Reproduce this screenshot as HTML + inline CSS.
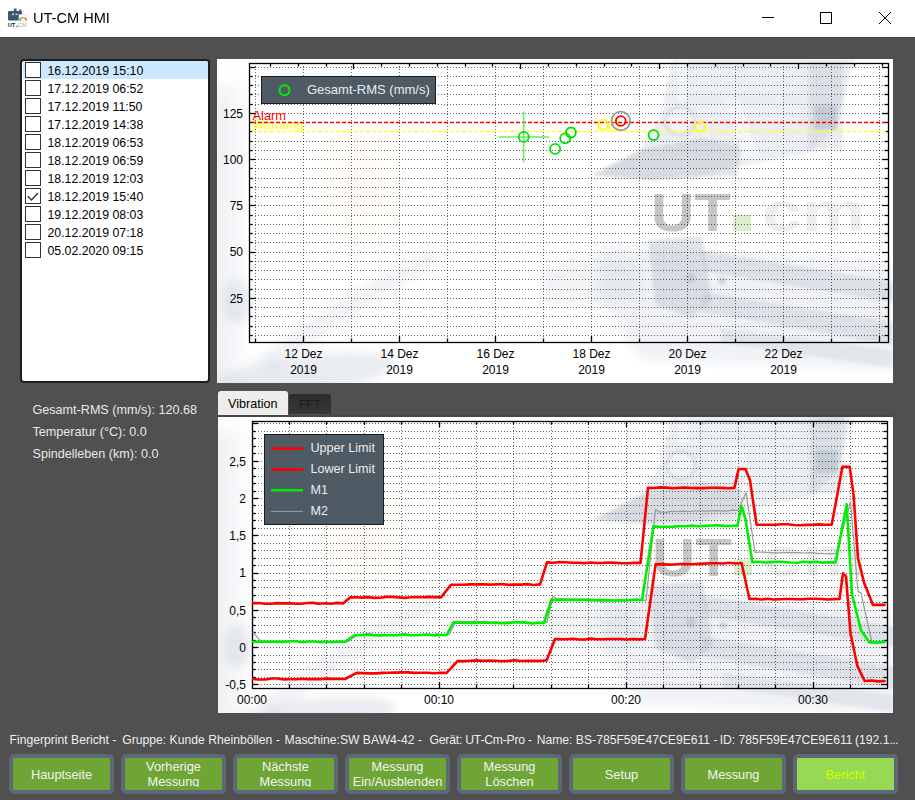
<!DOCTYPE html>
<html><head><meta charset="utf-8"><style>
html,body{margin:0;padding:0;}
body{width:915px;height:800px;overflow:hidden;position:relative;background:#505050;font-family:"Liberation Sans", sans-serif;}
div{box-sizing:content-box;}
</style></head><body>
<div style="position:absolute;left:0;top:0;width:915px;height:37px;background:#fff"></div>
<div style="position:absolute;left:0;top:37px;width:915px;height:1px;background:#464646"></div>
<svg style="position:absolute;left:0;top:0" width="40" height="37">
 <rect x="8" y="11" width="14" height="9.5" rx="1.2" fill="#3d5577"/>
 <rect x="14" y="8.5" width="2.5" height="3" fill="#3d5577"/><rect x="19.3" y="9.5" width="2" height="2" fill="#3d5577"/>
 <rect x="12" y="13.5" width="2" height="1.6" fill="#c9d3e0"/><rect x="15.5" y="13.5" width="2" height="1.6" fill="#c9d3e0"/>
 <rect x="19" y="14.5" width="7.5" height="6.5" fill="#fff" stroke="#f2b8b8" stroke-width="0.6"/>
 <path d="M19.9 20.6 A3.5 3.5 0 0 1 23 17.4" fill="none" stroke="#5fb03a" stroke-width="1.3"/>
 <path d="M23 17.4 A3.5 3.5 0 0 1 24.8 18" fill="none" stroke="#e8c020" stroke-width="1.3"/>
 <path d="M24.8 18 A3.5 3.5 0 0 1 26.2 20.2" fill="none" stroke="#e03a2a" stroke-width="1.3"/>
 <text x="7.8" y="27.3" font-size="5.6" font-weight="bold" fill="#222">UT</text>
 <rect x="16.2" y="25.5" width="1.5" height="1.8" fill="#5fb03a"/>
 <text x="18" y="27.3" font-size="5.6" fill="#aaa">CM</text>
</svg>
<div style="position:absolute;left:32.8px;top:8.5px;font-size:15.5px;line-height:18px;color:#000;transform:scaleX(0.94);transform-origin:0 0;white-space:nowrap">UT-CM HMI</div>
<svg style="position:absolute;left:0;top:0" width="915" height="37">
 <line x1="762" y1="17.5" x2="774" y2="17.5" stroke="#000" stroke-width="1"/>
 <rect x="820.5" y="12.5" width="11" height="11" fill="none" stroke="#000" stroke-width="1"/>
 <line x1="879" y1="12" x2="891" y2="24" stroke="#000" stroke-width="1"/>
 <line x1="891" y1="12" x2="879" y2="24" stroke="#000" stroke-width="1"/>
</svg>

<div style="position:absolute;left:20px;top:59px;width:186px;height:320px;border:2px solid #1e1e1e;border-radius:4px;background:#fff;overflow:hidden">
<div style="position:absolute;left:1px;top:0px;width:187px;height:18px;background:#cce8ff;"></div><div style="position:absolute;left:3px;top:1px;width:14px;height:14px;border:1px solid #333;background:#fff"></div><div style="position:absolute;left:25.5px;top:2px;height:18px;line-height:16px;font-size:12.3px;color:#000">16.12.2019 15:10</div>
<div style="position:absolute;left:1px;top:18px;width:187px;height:18px;"></div><div style="position:absolute;left:3px;top:19px;width:14px;height:14px;border:1px solid #333;background:#fff"></div><div style="position:absolute;left:25.5px;top:20px;height:18px;line-height:16px;font-size:12.3px;color:#000">17.12.2019 06:52</div>
<div style="position:absolute;left:1px;top:36px;width:187px;height:18px;"></div><div style="position:absolute;left:3px;top:37px;width:14px;height:14px;border:1px solid #333;background:#fff"></div><div style="position:absolute;left:25.5px;top:38px;height:18px;line-height:16px;font-size:12.3px;color:#000">17.12.2019 11:50</div>
<div style="position:absolute;left:1px;top:54px;width:187px;height:18px;"></div><div style="position:absolute;left:3px;top:55px;width:14px;height:14px;border:1px solid #333;background:#fff"></div><div style="position:absolute;left:25.5px;top:56px;height:18px;line-height:16px;font-size:12.3px;color:#000">17.12.2019 14:38</div>
<div style="position:absolute;left:1px;top:72px;width:187px;height:18px;"></div><div style="position:absolute;left:3px;top:73px;width:14px;height:14px;border:1px solid #333;background:#fff"></div><div style="position:absolute;left:25.5px;top:74px;height:18px;line-height:16px;font-size:12.3px;color:#000">18.12.2019 06:53</div>
<div style="position:absolute;left:1px;top:90px;width:187px;height:18px;"></div><div style="position:absolute;left:3px;top:91px;width:14px;height:14px;border:1px solid #333;background:#fff"></div><div style="position:absolute;left:25.5px;top:92px;height:18px;line-height:16px;font-size:12.3px;color:#000">18.12.2019 06:59</div>
<div style="position:absolute;left:1px;top:108px;width:187px;height:18px;"></div><div style="position:absolute;left:3px;top:109px;width:14px;height:14px;border:1px solid #333;background:#fff"></div><div style="position:absolute;left:25.5px;top:110px;height:18px;line-height:16px;font-size:12.3px;color:#000">18.12.2019 12:03</div>
<div style="position:absolute;left:1px;top:126px;width:187px;height:18px;"></div><div style="position:absolute;left:3px;top:127px;width:14px;height:14px;border:1px solid #333;background:#fff"><svg width="16" height="16" style="position:absolute;left:0;top:0"><path d="M1.8 7.3 L5.5 10.9 L12 4" fill="none" stroke="#333" stroke-width="1.4"/></svg></div><div style="position:absolute;left:25.5px;top:128px;height:18px;line-height:16px;font-size:12.3px;color:#000">18.12.2019 15:40</div>
<div style="position:absolute;left:1px;top:144px;width:187px;height:18px;"></div><div style="position:absolute;left:3px;top:145px;width:14px;height:14px;border:1px solid #333;background:#fff"></div><div style="position:absolute;left:25.5px;top:146px;height:18px;line-height:16px;font-size:12.3px;color:#000">19.12.2019 08:03</div>
<div style="position:absolute;left:1px;top:162px;width:187px;height:18px;"></div><div style="position:absolute;left:3px;top:163px;width:14px;height:14px;border:1px solid #333;background:#fff"></div><div style="position:absolute;left:25.5px;top:164px;height:18px;line-height:16px;font-size:12.3px;color:#000">20.12.2019 07:18</div>
<div style="position:absolute;left:1px;top:180px;width:187px;height:18px;"></div><div style="position:absolute;left:3px;top:181px;width:14px;height:14px;border:1px solid #333;background:#fff"></div><div style="position:absolute;left:25.5px;top:182px;height:18px;line-height:16px;font-size:12.3px;color:#000">05.02.2020 09:15</div>
</div>

<div style="position:absolute;left:217px;top:59px;width:676px;height:324px;background:#fff"></div>
<div style="position:absolute;left:32.5px;top:402px;font-size:12.6px;line-height:16px;color:#e8e8e8">Gesamt-RMS (mm/s): 120.68</div>
<div style="position:absolute;left:32.5px;top:424px;font-size:12.6px;line-height:16px;color:#e8e8e8">Temperatur (°C): 0.0</div>
<div style="position:absolute;left:32.5px;top:446px;font-size:12.6px;line-height:16px;color:#e8e8e8">Spindelleben (km): 0.0</div>

<div style="position:absolute;left:218px;top:391px;width:70px;height:24px;background:#efedeb;border-radius:3px 3px 0 0"></div>
<div style="position:absolute;left:228px;top:396px;font-size:12.6px;line-height:16px;color:#000">Vibration</div>
<div style="position:absolute;left:289px;top:394px;width:42px;height:20px;background:linear-gradient(#2c2c2c,#383838);border-radius:2px 2px 0 0"></div>
<div style="position:absolute;left:299px;top:397px;font-size:12px;line-height:16px;color:#1e1e1e">FFT</div>
<div style="position:absolute;left:218px;top:415px;width:675px;height:2px;background:#474747"></div>
<div style="position:absolute;left:218px;top:417px;width:675px;height:296px;background:#fff"></div>

<svg style="position:absolute;left:0;top:0;font-family:"Liberation Sans", sans-serif" width="915" height="800">

<defs>
 <filter id="bl4" x="-20%" y="-20%" width="140%" height="140%"><feGaussianBlur stdDeviation="4"/></filter>
 <filter id="bl8" x="-50%" y="-50%" width="200%" height="200%"><feGaussianBlur stdDeviation="8"/></filter>
 <filter id="bl2" x="-20%" y="-20%" width="140%" height="140%"><feGaussianBlur stdDeviation="1.5"/></filter>
 <linearGradient id="lg1" x1="0" x2="1" y1="0" y2="0"><stop offset="0" stop-color="#b9c3d1" stop-opacity="0.32"/><stop offset="1" stop-color="#b9c3d1" stop-opacity="0"/></linearGradient>
 <clipPath id="cpTop"><rect x="217" y="59" width="676" height="324"/></clipPath>
 <clipPath id="cpBot"><rect x="218" y="417" width="675" height="296"/></clipPath>
 <g id="wm">
  <rect x="205" y="85" width="50" height="310" fill="url(#lg1)" filter="url(#bl8)"/>
  <ellipse cx="236" cy="302" rx="14" ry="22" fill="#c3cbd7" opacity="0.35" filter="url(#bl4)"/>
  <ellipse cx="300" cy="376" rx="95" ry="20" transform="rotate(-8 300 376)" fill="#c3cbd7" opacity="0.35" filter="url(#bl4)"/>
  <path d="M255 360 Q330 300 430 250 L440 262 Q340 320 270 375 Z" fill="#c8d0da" opacity="0.25" filter="url(#bl4)"/>
  <ellipse cx="360" cy="185" rx="40" ry="55" fill="#fff3d6" opacity="0.18" filter="url(#bl8)"/>
  <path d="M592 174 L640 150 L660 118 L672 59 L855 59 L835 130 L810 152 L740 166 L700 176 L650 180 Z" fill="#c3ccd7" opacity="0.32" filter="url(#bl2)"/>
  <path d="M592 176 L640 150 L700 138 L740 145 L738 176 L650 180 Z" fill="#b4bac2" opacity="0.35" filter="url(#bl2)"/>
  <rect x="678" y="59" width="9" height="42" fill="#ffffff" opacity="0.55" filter="url(#bl2)"/>
  <path d="M725 100 L740 100 L760 160 L745 162 Z" fill="#ffffff" opacity="0.5" filter="url(#bl2)"/>
  <rect x="814" y="105" width="23" height="24" fill="#aeb8c5" opacity="0.5" filter="url(#bl2)"/>
  <circle cx="680" cy="121" r="14" fill="#f4f6f8" opacity="0.7" filter="url(#bl2)"/>
  <circle cx="680" cy="121" r="14" fill="none" stroke="#b0b8c2" stroke-width="2" opacity="0.5" filter="url(#bl2)"/>
  <path d="M600 245 L893 262 L893 370 L640 360 L600 300 Z" fill="#d5dce5" opacity="0.35" filter="url(#bl4)"/>
  <path d="M648 240 L702 236 L712 300 L692 318 L655 305 Z" fill="#b5bfcb" opacity="0.4" filter="url(#bl2)"/>
  <path d="M700 250 L893 282 L893 302 L705 272 Z" fill="#b3bdca" opacity="0.32" filter="url(#bl2)"/>
  <path d="M702 292 L893 322 L893 345 L700 312 Z" fill="#b3bdca" opacity="0.3" filter="url(#bl2)"/>
  <path d="M720 328 L893 350 L893 368 L722 343 Z" fill="#c0c9d4" opacity="0.28" filter="url(#bl2)"/>
  <circle cx="690" cy="278" r="5" fill="#9aa4b0" opacity="0.35" filter="url(#bl2)"/>
  <circle cx="722" cy="281" r="4" fill="#9aa4b0" opacity="0.35" filter="url(#bl2)"/>
  <path d="M540 270 Q580 250 640 262 L640 300 Q590 310 545 300 Z" fill="#c8d0da" opacity="0.25" filter="url(#bl4)"/>
  <rect x="808" y="62" width="35" height="88" fill="#b0bac6" opacity="0.25" filter="url(#bl2)"/>
  <text x="651" y="231" font-size="53" font-weight="bold" fill="#c6c6c6" textLength="80" lengthAdjust="spacingAndGlyphs">UT</text>
  <rect x="733" y="215" width="18" height="16" fill="#dcefcc"/>
  <text x="762" y="231" font-size="55" font-weight="bold" fill="#eeeeee" textLength="103" lengthAdjust="spacingAndGlyphs">cm</text>
 </g>
</defs>
<g clip-path="url(#cpTop)"><use href="#wm"/></g>
<g clip-path="url(#cpBot)"><use href="#wm" transform="translate(1 344.5)"/></g>
<line x1="255.5" y1="63" x2="255.5" y2="342" stroke="#000" stroke-opacity="0.6" stroke-width="1" stroke-dasharray="1 2"/>
<line x1="303.5" y1="63" x2="303.5" y2="342" stroke="#000" stroke-opacity="0.6" stroke-width="1" stroke-dasharray="1 2"/>
<line x1="351.5" y1="63" x2="351.5" y2="342" stroke="#000" stroke-opacity="0.6" stroke-width="1" stroke-dasharray="1 2"/>
<line x1="399.5" y1="63" x2="399.5" y2="342" stroke="#000" stroke-opacity="0.6" stroke-width="1" stroke-dasharray="1 2"/>
<line x1="447.5" y1="63" x2="447.5" y2="342" stroke="#000" stroke-opacity="0.6" stroke-width="1" stroke-dasharray="1 2"/>
<line x1="495.5" y1="63" x2="495.5" y2="342" stroke="#000" stroke-opacity="0.6" stroke-width="1" stroke-dasharray="1 2"/>
<line x1="543.5" y1="63" x2="543.5" y2="342" stroke="#000" stroke-opacity="0.6" stroke-width="1" stroke-dasharray="1 2"/>
<line x1="591.5" y1="63" x2="591.5" y2="342" stroke="#000" stroke-opacity="0.6" stroke-width="1" stroke-dasharray="1 2"/>
<line x1="639.5" y1="63" x2="639.5" y2="342" stroke="#000" stroke-opacity="0.6" stroke-width="1" stroke-dasharray="1 2"/>
<line x1="687.5" y1="63" x2="687.5" y2="342" stroke="#000" stroke-opacity="0.6" stroke-width="1" stroke-dasharray="1 2"/>
<line x1="735.5" y1="63" x2="735.5" y2="342" stroke="#000" stroke-opacity="0.6" stroke-width="1" stroke-dasharray="1 2"/>
<line x1="783.5" y1="63" x2="783.5" y2="342" stroke="#000" stroke-opacity="0.6" stroke-width="1" stroke-dasharray="1 2"/>
<line x1="831.5" y1="63" x2="831.5" y2="342" stroke="#000" stroke-opacity="0.6" stroke-width="1" stroke-dasharray="1 2"/>
<line x1="879.5" y1="63" x2="879.5" y2="342" stroke="#000" stroke-opacity="0.6" stroke-width="1" stroke-dasharray="1 2"/>
<line x1="249" y1="335.5" x2="888" y2="335.5" stroke="#000" stroke-opacity="0.6" stroke-width="1" stroke-dasharray="1 2"/>
<line x1="249" y1="326.5" x2="888" y2="326.5" stroke="#000" stroke-opacity="0.6" stroke-width="1" stroke-dasharray="1 2"/>
<line x1="249" y1="316.5" x2="888" y2="316.5" stroke="#000" stroke-opacity="0.6" stroke-width="1" stroke-dasharray="1 2"/>
<line x1="249" y1="307.5" x2="888" y2="307.5" stroke="#000" stroke-opacity="0.6" stroke-width="1" stroke-dasharray="1 2"/>
<line x1="249" y1="298.5" x2="888" y2="298.5" stroke="#000" stroke-opacity="0.6" stroke-width="1" stroke-dasharray="1 2"/>
<line x1="249" y1="289.5" x2="888" y2="289.5" stroke="#000" stroke-opacity="0.6" stroke-width="1" stroke-dasharray="1 2"/>
<line x1="249" y1="279.5" x2="888" y2="279.5" stroke="#000" stroke-opacity="0.6" stroke-width="1" stroke-dasharray="1 2"/>
<line x1="249" y1="270.5" x2="888" y2="270.5" stroke="#000" stroke-opacity="0.6" stroke-width="1" stroke-dasharray="1 2"/>
<line x1="249" y1="261.5" x2="888" y2="261.5" stroke="#000" stroke-opacity="0.6" stroke-width="1" stroke-dasharray="1 2"/>
<line x1="249" y1="252.5" x2="888" y2="252.5" stroke="#000" stroke-opacity="0.6" stroke-width="1" stroke-dasharray="1 2"/>
<line x1="249" y1="242.5" x2="888" y2="242.5" stroke="#000" stroke-opacity="0.6" stroke-width="1" stroke-dasharray="1 2"/>
<line x1="249" y1="233.5" x2="888" y2="233.5" stroke="#000" stroke-opacity="0.6" stroke-width="1" stroke-dasharray="1 2"/>
<line x1="249" y1="224.5" x2="888" y2="224.5" stroke="#000" stroke-opacity="0.6" stroke-width="1" stroke-dasharray="1 2"/>
<line x1="249" y1="215.5" x2="888" y2="215.5" stroke="#000" stroke-opacity="0.6" stroke-width="1" stroke-dasharray="1 2"/>
<line x1="249" y1="205.5" x2="888" y2="205.5" stroke="#000" stroke-opacity="0.6" stroke-width="1" stroke-dasharray="1 2"/>
<line x1="249" y1="196.5" x2="888" y2="196.5" stroke="#000" stroke-opacity="0.6" stroke-width="1" stroke-dasharray="1 2"/>
<line x1="249" y1="187.5" x2="888" y2="187.5" stroke="#000" stroke-opacity="0.6" stroke-width="1" stroke-dasharray="1 2"/>
<line x1="249" y1="178.5" x2="888" y2="178.5" stroke="#000" stroke-opacity="0.6" stroke-width="1" stroke-dasharray="1 2"/>
<line x1="249" y1="168.5" x2="888" y2="168.5" stroke="#000" stroke-opacity="0.6" stroke-width="1" stroke-dasharray="1 2"/>
<line x1="249" y1="159.5" x2="888" y2="159.5" stroke="#000" stroke-opacity="0.6" stroke-width="1" stroke-dasharray="1 2"/>
<line x1="249" y1="150.5" x2="888" y2="150.5" stroke="#000" stroke-opacity="0.6" stroke-width="1" stroke-dasharray="1 2"/>
<line x1="249" y1="141.5" x2="888" y2="141.5" stroke="#000" stroke-opacity="0.6" stroke-width="1" stroke-dasharray="1 2"/>
<line x1="249" y1="131.5" x2="888" y2="131.5" stroke="#000" stroke-opacity="0.6" stroke-width="1" stroke-dasharray="1 2"/>
<line x1="249" y1="122.5" x2="888" y2="122.5" stroke="#000" stroke-opacity="0.6" stroke-width="1" stroke-dasharray="1 2"/>
<line x1="249" y1="113.5" x2="888" y2="113.5" stroke="#000" stroke-opacity="0.6" stroke-width="1" stroke-dasharray="1 2"/>
<line x1="249" y1="104.5" x2="888" y2="104.5" stroke="#000" stroke-opacity="0.6" stroke-width="1" stroke-dasharray="1 2"/>
<line x1="249" y1="94.5" x2="888" y2="94.5" stroke="#000" stroke-opacity="0.6" stroke-width="1" stroke-dasharray="1 2"/>
<line x1="249" y1="85.5" x2="888" y2="85.5" stroke="#000" stroke-opacity="0.6" stroke-width="1" stroke-dasharray="1 2"/>
<line x1="249" y1="76.5" x2="888" y2="76.5" stroke="#000" stroke-opacity="0.6" stroke-width="1" stroke-dasharray="1 2"/>
<line x1="249" y1="67.5" x2="888" y2="67.5" stroke="#000" stroke-opacity="0.6" stroke-width="1" stroke-dasharray="1 2"/>
<rect x="249.5" y="63.5" width="639" height="279" fill="none" stroke="#000" stroke-width="1.3"/>
<line x1="249" y1="335.5" x2="252.5" y2="335.5" stroke="#000" stroke-width="1.3"/>
<line x1="888" y1="335.5" x2="884.5" y2="335.5" stroke="#000" stroke-width="1.3"/>
<line x1="249" y1="326.5" x2="252.5" y2="326.5" stroke="#000" stroke-width="1.3"/>
<line x1="888" y1="326.5" x2="884.5" y2="326.5" stroke="#000" stroke-width="1.3"/>
<line x1="249" y1="316.5" x2="252.5" y2="316.5" stroke="#000" stroke-width="1.3"/>
<line x1="888" y1="316.5" x2="884.5" y2="316.5" stroke="#000" stroke-width="1.3"/>
<line x1="249" y1="307.5" x2="252.5" y2="307.5" stroke="#000" stroke-width="1.3"/>
<line x1="888" y1="307.5" x2="884.5" y2="307.5" stroke="#000" stroke-width="1.3"/>
<line x1="249" y1="298.5" x2="255" y2="298.5" stroke="#000" stroke-width="1.3"/>
<line x1="888" y1="298.5" x2="882" y2="298.5" stroke="#000" stroke-width="1.3"/>
<line x1="249" y1="289.5" x2="252.5" y2="289.5" stroke="#000" stroke-width="1.3"/>
<line x1="888" y1="289.5" x2="884.5" y2="289.5" stroke="#000" stroke-width="1.3"/>
<line x1="249" y1="279.5" x2="252.5" y2="279.5" stroke="#000" stroke-width="1.3"/>
<line x1="888" y1="279.5" x2="884.5" y2="279.5" stroke="#000" stroke-width="1.3"/>
<line x1="249" y1="270.5" x2="252.5" y2="270.5" stroke="#000" stroke-width="1.3"/>
<line x1="888" y1="270.5" x2="884.5" y2="270.5" stroke="#000" stroke-width="1.3"/>
<line x1="249" y1="261.5" x2="252.5" y2="261.5" stroke="#000" stroke-width="1.3"/>
<line x1="888" y1="261.5" x2="884.5" y2="261.5" stroke="#000" stroke-width="1.3"/>
<line x1="249" y1="252.5" x2="255" y2="252.5" stroke="#000" stroke-width="1.3"/>
<line x1="888" y1="252.5" x2="882" y2="252.5" stroke="#000" stroke-width="1.3"/>
<line x1="249" y1="242.5" x2="252.5" y2="242.5" stroke="#000" stroke-width="1.3"/>
<line x1="888" y1="242.5" x2="884.5" y2="242.5" stroke="#000" stroke-width="1.3"/>
<line x1="249" y1="233.5" x2="252.5" y2="233.5" stroke="#000" stroke-width="1.3"/>
<line x1="888" y1="233.5" x2="884.5" y2="233.5" stroke="#000" stroke-width="1.3"/>
<line x1="249" y1="224.5" x2="252.5" y2="224.5" stroke="#000" stroke-width="1.3"/>
<line x1="888" y1="224.5" x2="884.5" y2="224.5" stroke="#000" stroke-width="1.3"/>
<line x1="249" y1="215.5" x2="252.5" y2="215.5" stroke="#000" stroke-width="1.3"/>
<line x1="888" y1="215.5" x2="884.5" y2="215.5" stroke="#000" stroke-width="1.3"/>
<line x1="249" y1="205.5" x2="255" y2="205.5" stroke="#000" stroke-width="1.3"/>
<line x1="888" y1="205.5" x2="882" y2="205.5" stroke="#000" stroke-width="1.3"/>
<line x1="249" y1="196.5" x2="252.5" y2="196.5" stroke="#000" stroke-width="1.3"/>
<line x1="888" y1="196.5" x2="884.5" y2="196.5" stroke="#000" stroke-width="1.3"/>
<line x1="249" y1="187.5" x2="252.5" y2="187.5" stroke="#000" stroke-width="1.3"/>
<line x1="888" y1="187.5" x2="884.5" y2="187.5" stroke="#000" stroke-width="1.3"/>
<line x1="249" y1="178.5" x2="252.5" y2="178.5" stroke="#000" stroke-width="1.3"/>
<line x1="888" y1="178.5" x2="884.5" y2="178.5" stroke="#000" stroke-width="1.3"/>
<line x1="249" y1="168.5" x2="252.5" y2="168.5" stroke="#000" stroke-width="1.3"/>
<line x1="888" y1="168.5" x2="884.5" y2="168.5" stroke="#000" stroke-width="1.3"/>
<line x1="249" y1="159.5" x2="255" y2="159.5" stroke="#000" stroke-width="1.3"/>
<line x1="888" y1="159.5" x2="882" y2="159.5" stroke="#000" stroke-width="1.3"/>
<line x1="249" y1="150.5" x2="252.5" y2="150.5" stroke="#000" stroke-width="1.3"/>
<line x1="888" y1="150.5" x2="884.5" y2="150.5" stroke="#000" stroke-width="1.3"/>
<line x1="249" y1="141.5" x2="252.5" y2="141.5" stroke="#000" stroke-width="1.3"/>
<line x1="888" y1="141.5" x2="884.5" y2="141.5" stroke="#000" stroke-width="1.3"/>
<line x1="249" y1="131.5" x2="252.5" y2="131.5" stroke="#000" stroke-width="1.3"/>
<line x1="888" y1="131.5" x2="884.5" y2="131.5" stroke="#000" stroke-width="1.3"/>
<line x1="249" y1="122.5" x2="252.5" y2="122.5" stroke="#000" stroke-width="1.3"/>
<line x1="888" y1="122.5" x2="884.5" y2="122.5" stroke="#000" stroke-width="1.3"/>
<line x1="249" y1="113.5" x2="255" y2="113.5" stroke="#000" stroke-width="1.3"/>
<line x1="888" y1="113.5" x2="882" y2="113.5" stroke="#000" stroke-width="1.3"/>
<line x1="249" y1="104.5" x2="252.5" y2="104.5" stroke="#000" stroke-width="1.3"/>
<line x1="888" y1="104.5" x2="884.5" y2="104.5" stroke="#000" stroke-width="1.3"/>
<line x1="249" y1="94.5" x2="252.5" y2="94.5" stroke="#000" stroke-width="1.3"/>
<line x1="888" y1="94.5" x2="884.5" y2="94.5" stroke="#000" stroke-width="1.3"/>
<line x1="249" y1="85.5" x2="252.5" y2="85.5" stroke="#000" stroke-width="1.3"/>
<line x1="888" y1="85.5" x2="884.5" y2="85.5" stroke="#000" stroke-width="1.3"/>
<line x1="249" y1="76.5" x2="252.5" y2="76.5" stroke="#000" stroke-width="1.3"/>
<line x1="888" y1="76.5" x2="884.5" y2="76.5" stroke="#000" stroke-width="1.3"/>
<line x1="249" y1="67.5" x2="255" y2="67.5" stroke="#000" stroke-width="1.3"/>
<line x1="888" y1="67.5" x2="882" y2="67.5" stroke="#000" stroke-width="1.3"/>
<line x1="255.5" y1="342" x2="255.5" y2="338.5" stroke="#000" stroke-width="1.3"/>
<line x1="303.5" y1="342" x2="303.5" y2="336" stroke="#000" stroke-width="1.3"/>
<line x1="351.5" y1="342" x2="351.5" y2="338.5" stroke="#000" stroke-width="1.3"/>
<line x1="399.5" y1="342" x2="399.5" y2="336" stroke="#000" stroke-width="1.3"/>
<line x1="447.5" y1="342" x2="447.5" y2="338.5" stroke="#000" stroke-width="1.3"/>
<line x1="495.5" y1="342" x2="495.5" y2="336" stroke="#000" stroke-width="1.3"/>
<line x1="543.5" y1="342" x2="543.5" y2="338.5" stroke="#000" stroke-width="1.3"/>
<line x1="591.5" y1="342" x2="591.5" y2="336" stroke="#000" stroke-width="1.3"/>
<line x1="639.5" y1="342" x2="639.5" y2="338.5" stroke="#000" stroke-width="1.3"/>
<line x1="687.5" y1="342" x2="687.5" y2="336" stroke="#000" stroke-width="1.3"/>
<line x1="735.5" y1="342" x2="735.5" y2="338.5" stroke="#000" stroke-width="1.3"/>
<line x1="783.5" y1="342" x2="783.5" y2="336" stroke="#000" stroke-width="1.3"/>
<line x1="831.5" y1="342" x2="831.5" y2="338.5" stroke="#000" stroke-width="1.3"/>
<line x1="879.5" y1="342" x2="879.5" y2="336" stroke="#000" stroke-width="1.3"/>
<line x1="270.5" y1="63" x2="270.5" y2="66.5" stroke="#000" stroke-width="1.3"/>
<line x1="298.5" y1="63" x2="298.5" y2="66.5" stroke="#000" stroke-width="1.3"/>
<line x1="326.5" y1="63" x2="326.5" y2="66.5" stroke="#000" stroke-width="1.3"/>
<line x1="353.5" y1="63" x2="353.5" y2="69" stroke="#000" stroke-width="1.3"/>
<line x1="381.5" y1="63" x2="381.5" y2="66.5" stroke="#000" stroke-width="1.3"/>
<line x1="409.5" y1="63" x2="409.5" y2="66.5" stroke="#000" stroke-width="1.3"/>
<line x1="437.5" y1="63" x2="437.5" y2="66.5" stroke="#000" stroke-width="1.3"/>
<line x1="465.5" y1="63" x2="465.5" y2="66.5" stroke="#000" stroke-width="1.3"/>
<line x1="492.5" y1="63" x2="492.5" y2="66.5" stroke="#000" stroke-width="1.3"/>
<line x1="520.5" y1="63" x2="520.5" y2="69" stroke="#000" stroke-width="1.3"/>
<line x1="548.5" y1="63" x2="548.5" y2="66.5" stroke="#000" stroke-width="1.3"/>
<line x1="576.5" y1="63" x2="576.5" y2="66.5" stroke="#000" stroke-width="1.3"/>
<line x1="604.5" y1="63" x2="604.5" y2="66.5" stroke="#000" stroke-width="1.3"/>
<line x1="631.5" y1="63" x2="631.5" y2="66.5" stroke="#000" stroke-width="1.3"/>
<line x1="659.5" y1="63" x2="659.5" y2="69" stroke="#000" stroke-width="1.3"/>
<line x1="687.5" y1="63" x2="687.5" y2="66.5" stroke="#000" stroke-width="1.3"/>
<line x1="715.5" y1="63" x2="715.5" y2="66.5" stroke="#000" stroke-width="1.3"/>
<line x1="743.5" y1="63" x2="743.5" y2="66.5" stroke="#000" stroke-width="1.3"/>
<line x1="770.5" y1="63" x2="770.5" y2="66.5" stroke="#000" stroke-width="1.3"/>
<line x1="798.5" y1="63" x2="798.5" y2="69" stroke="#000" stroke-width="1.3"/>
<line x1="826.5" y1="63" x2="826.5" y2="66.5" stroke="#000" stroke-width="1.3"/>
<line x1="854.5" y1="63" x2="854.5" y2="66.5" stroke="#000" stroke-width="1.3"/>
<line x1="882.5" y1="63" x2="882.5" y2="66.5" stroke="#000" stroke-width="1.3"/>
<text x="243" y="302.6" text-anchor="end" font-size="12" fill="#000">25</text>
<text x="243" y="256.3" text-anchor="end" font-size="12" fill="#000">50</text>
<text x="243" y="210.1" text-anchor="end" font-size="12" fill="#000">75</text>
<text x="243" y="163.8" text-anchor="end" font-size="12" fill="#000">100</text>
<text x="243" y="117.5" text-anchor="end" font-size="12" fill="#000">125</text>
<text x="303.5" y="358" text-anchor="middle" font-size="12" fill="#000">12 Dez</text>
<text x="303.5" y="373.5" text-anchor="middle" font-size="12" fill="#000">2019</text>
<text x="399.5" y="358" text-anchor="middle" font-size="12" fill="#000">14 Dez</text>
<text x="399.5" y="373.5" text-anchor="middle" font-size="12" fill="#000">2019</text>
<text x="495.5" y="358" text-anchor="middle" font-size="12" fill="#000">16 Dez</text>
<text x="495.5" y="373.5" text-anchor="middle" font-size="12" fill="#000">2019</text>
<text x="591.5" y="358" text-anchor="middle" font-size="12" fill="#000">18 Dez</text>
<text x="591.5" y="373.5" text-anchor="middle" font-size="12" fill="#000">2019</text>
<text x="687.5" y="358" text-anchor="middle" font-size="12" fill="#000">20 Dez</text>
<text x="687.5" y="373.5" text-anchor="middle" font-size="12" fill="#000">2019</text>
<text x="783.5" y="358" text-anchor="middle" font-size="12" fill="#000">22 Dez</text>
<text x="783.5" y="373.5" text-anchor="middle" font-size="12" fill="#000">2019</text>
<text x="252.5" y="120" font-size="12.8" fill="#ff0000">Alarm</text>
<text x="252.5" y="128.8" font-size="12.8" fill="#ffff00">Warnung</text>
<line x1="250" y1="122.5" x2="888" y2="122.5" stroke="#ff0000" stroke-width="1.5" stroke-dasharray="4 2" stroke-dashoffset="-2"/>
<line x1="250" y1="131.5" x2="888" y2="131.5" stroke="#ffff30" stroke-width="1.4" stroke-dasharray="4 2" stroke-dashoffset="-2"/>
<rect x="261.5" y="76.5" width="174" height="27" fill="#4e5a64" stroke="#1c1c1c" stroke-width="1"/>
<circle cx="284.5" cy="90.3" r="5" fill="none" stroke="#00ee00" stroke-width="2"/>
<text x="307" y="93.8" font-size="13" fill="#ececec">Gesamt-RMS (mm/s)</text>
<line x1="498.5" y1="137" x2="549" y2="137" stroke="#66ee66" stroke-width="1.6"/>
<line x1="523.7" y1="111.5" x2="523.7" y2="162.3" stroke="#66ee66" stroke-width="1.6"/>
<circle cx="523.7" cy="136.9" r="5" fill="none" stroke="#00e000" stroke-width="1.8"/>
<circle cx="555.2" cy="148.9" r="5" fill="none" stroke="#00e000" stroke-width="1.8"/>
<circle cx="565.2" cy="138.3" r="5" fill="none" stroke="#00e000" stroke-width="1.8"/>
<circle cx="570.9" cy="132.5" r="5" fill="none" stroke="#00e000" stroke-width="1.8"/>
<circle cx="653.6" cy="135.1" r="5" fill="none" stroke="#00e000" stroke-width="1.8"/>
<circle cx="613.6" cy="126.2" r="5" fill="none" stroke="#ffff44" stroke-width="1.8"/>
<circle cx="603.1" cy="124.7" r="5" fill="none" stroke="#ffff00" stroke-width="1.8"/>
<circle cx="700.2" cy="126.9" r="5" fill="none" stroke="#ffff00" stroke-width="1.8"/>
<circle cx="620.8" cy="121" r="9.3" fill="none" stroke="#999" stroke-width="1.8"/>
<circle cx="620.8" cy="121" r="4.9" fill="none" stroke="#ff0000" stroke-width="1.8"/>
<line x1="289.5" y1="421" x2="289.5" y2="688" stroke="#000" stroke-opacity="0.6" stroke-width="1" stroke-dasharray="1 2"/>
<line x1="326.5" y1="421" x2="326.5" y2="688" stroke="#000" stroke-opacity="0.6" stroke-width="1" stroke-dasharray="1 2"/>
<line x1="364.5" y1="421" x2="364.5" y2="688" stroke="#000" stroke-opacity="0.6" stroke-width="1" stroke-dasharray="1 2"/>
<line x1="401.5" y1="421" x2="401.5" y2="688" stroke="#000" stroke-opacity="0.6" stroke-width="1" stroke-dasharray="1 2"/>
<line x1="439.5" y1="421" x2="439.5" y2="688" stroke="#000" stroke-opacity="0.6" stroke-width="1" stroke-dasharray="1 2"/>
<line x1="476.5" y1="421" x2="476.5" y2="688" stroke="#000" stroke-opacity="0.6" stroke-width="1" stroke-dasharray="1 2"/>
<line x1="513.5" y1="421" x2="513.5" y2="688" stroke="#000" stroke-opacity="0.6" stroke-width="1" stroke-dasharray="1 2"/>
<line x1="551.5" y1="421" x2="551.5" y2="688" stroke="#000" stroke-opacity="0.6" stroke-width="1" stroke-dasharray="1 2"/>
<line x1="588.5" y1="421" x2="588.5" y2="688" stroke="#000" stroke-opacity="0.6" stroke-width="1" stroke-dasharray="1 2"/>
<line x1="626.5" y1="421" x2="626.5" y2="688" stroke="#000" stroke-opacity="0.6" stroke-width="1" stroke-dasharray="1 2"/>
<line x1="663.5" y1="421" x2="663.5" y2="688" stroke="#000" stroke-opacity="0.6" stroke-width="1" stroke-dasharray="1 2"/>
<line x1="700.5" y1="421" x2="700.5" y2="688" stroke="#000" stroke-opacity="0.6" stroke-width="1" stroke-dasharray="1 2"/>
<line x1="738.5" y1="421" x2="738.5" y2="688" stroke="#000" stroke-opacity="0.6" stroke-width="1" stroke-dasharray="1 2"/>
<line x1="775.5" y1="421" x2="775.5" y2="688" stroke="#000" stroke-opacity="0.6" stroke-width="1" stroke-dasharray="1 2"/>
<line x1="813.5" y1="421" x2="813.5" y2="688" stroke="#000" stroke-opacity="0.6" stroke-width="1" stroke-dasharray="1 2"/>
<line x1="850.5" y1="421" x2="850.5" y2="688" stroke="#000" stroke-opacity="0.6" stroke-width="1" stroke-dasharray="1 2"/>
<line x1="252" y1="684.5" x2="887" y2="684.5" stroke="#000" stroke-opacity="0.6" stroke-width="1" stroke-dasharray="1 2"/>
<line x1="252" y1="677.5" x2="887" y2="677.5" stroke="#000" stroke-opacity="0.6" stroke-width="1" stroke-dasharray="1 2"/>
<line x1="252" y1="669.5" x2="887" y2="669.5" stroke="#000" stroke-opacity="0.6" stroke-width="1" stroke-dasharray="1 2"/>
<line x1="252" y1="662.5" x2="887" y2="662.5" stroke="#000" stroke-opacity="0.6" stroke-width="1" stroke-dasharray="1 2"/>
<line x1="252" y1="655.5" x2="887" y2="655.5" stroke="#000" stroke-opacity="0.6" stroke-width="1" stroke-dasharray="1 2"/>
<line x1="252" y1="647.5" x2="887" y2="647.5" stroke="#000" stroke-opacity="0.6" stroke-width="1" stroke-dasharray="1 2"/>
<line x1="252" y1="640.5" x2="887" y2="640.5" stroke="#000" stroke-opacity="0.6" stroke-width="1" stroke-dasharray="1 2"/>
<line x1="252" y1="632.5" x2="887" y2="632.5" stroke="#000" stroke-opacity="0.6" stroke-width="1" stroke-dasharray="1 2"/>
<line x1="252" y1="625.5" x2="887" y2="625.5" stroke="#000" stroke-opacity="0.6" stroke-width="1" stroke-dasharray="1 2"/>
<line x1="252" y1="617.5" x2="887" y2="617.5" stroke="#000" stroke-opacity="0.6" stroke-width="1" stroke-dasharray="1 2"/>
<line x1="252" y1="610.5" x2="887" y2="610.5" stroke="#000" stroke-opacity="0.6" stroke-width="1" stroke-dasharray="1 2"/>
<line x1="252" y1="602.5" x2="887" y2="602.5" stroke="#000" stroke-opacity="0.6" stroke-width="1" stroke-dasharray="1 2"/>
<line x1="252" y1="595.5" x2="887" y2="595.5" stroke="#000" stroke-opacity="0.6" stroke-width="1" stroke-dasharray="1 2"/>
<line x1="252" y1="587.5" x2="887" y2="587.5" stroke="#000" stroke-opacity="0.6" stroke-width="1" stroke-dasharray="1 2"/>
<line x1="252" y1="580.5" x2="887" y2="580.5" stroke="#000" stroke-opacity="0.6" stroke-width="1" stroke-dasharray="1 2"/>
<line x1="252" y1="573.5" x2="887" y2="573.5" stroke="#000" stroke-opacity="0.6" stroke-width="1" stroke-dasharray="1 2"/>
<line x1="252" y1="565.5" x2="887" y2="565.5" stroke="#000" stroke-opacity="0.6" stroke-width="1" stroke-dasharray="1 2"/>
<line x1="252" y1="558.5" x2="887" y2="558.5" stroke="#000" stroke-opacity="0.6" stroke-width="1" stroke-dasharray="1 2"/>
<line x1="252" y1="550.5" x2="887" y2="550.5" stroke="#000" stroke-opacity="0.6" stroke-width="1" stroke-dasharray="1 2"/>
<line x1="252" y1="543.5" x2="887" y2="543.5" stroke="#000" stroke-opacity="0.6" stroke-width="1" stroke-dasharray="1 2"/>
<line x1="252" y1="535.5" x2="887" y2="535.5" stroke="#000" stroke-opacity="0.6" stroke-width="1" stroke-dasharray="1 2"/>
<line x1="252" y1="528.5" x2="887" y2="528.5" stroke="#000" stroke-opacity="0.6" stroke-width="1" stroke-dasharray="1 2"/>
<line x1="252" y1="520.5" x2="887" y2="520.5" stroke="#000" stroke-opacity="0.6" stroke-width="1" stroke-dasharray="1 2"/>
<line x1="252" y1="513.5" x2="887" y2="513.5" stroke="#000" stroke-opacity="0.6" stroke-width="1" stroke-dasharray="1 2"/>
<line x1="252" y1="505.5" x2="887" y2="505.5" stroke="#000" stroke-opacity="0.6" stroke-width="1" stroke-dasharray="1 2"/>
<line x1="252" y1="498.5" x2="887" y2="498.5" stroke="#000" stroke-opacity="0.6" stroke-width="1" stroke-dasharray="1 2"/>
<line x1="252" y1="491.5" x2="887" y2="491.5" stroke="#000" stroke-opacity="0.6" stroke-width="1" stroke-dasharray="1 2"/>
<line x1="252" y1="483.5" x2="887" y2="483.5" stroke="#000" stroke-opacity="0.6" stroke-width="1" stroke-dasharray="1 2"/>
<line x1="252" y1="476.5" x2="887" y2="476.5" stroke="#000" stroke-opacity="0.6" stroke-width="1" stroke-dasharray="1 2"/>
<line x1="252" y1="468.5" x2="887" y2="468.5" stroke="#000" stroke-opacity="0.6" stroke-width="1" stroke-dasharray="1 2"/>
<line x1="252" y1="461.5" x2="887" y2="461.5" stroke="#000" stroke-opacity="0.6" stroke-width="1" stroke-dasharray="1 2"/>
<line x1="252" y1="453.5" x2="887" y2="453.5" stroke="#000" stroke-opacity="0.6" stroke-width="1" stroke-dasharray="1 2"/>
<line x1="252" y1="446.5" x2="887" y2="446.5" stroke="#000" stroke-opacity="0.6" stroke-width="1" stroke-dasharray="1 2"/>
<line x1="252" y1="438.5" x2="887" y2="438.5" stroke="#000" stroke-opacity="0.6" stroke-width="1" stroke-dasharray="1 2"/>
<line x1="252" y1="431.5" x2="887" y2="431.5" stroke="#000" stroke-opacity="0.6" stroke-width="1" stroke-dasharray="1 2"/>
<line x1="252" y1="423.5" x2="887" y2="423.5" stroke="#000" stroke-opacity="0.6" stroke-width="1" stroke-dasharray="1 2"/>
<rect x="252.5" y="421.5" width="635" height="267" fill="none" stroke="#000" stroke-width="1.3"/>
<line x1="252" y1="684.5" x2="258" y2="684.5" stroke="#000" stroke-width="1.3"/>
<line x1="887" y1="684.5" x2="881" y2="684.5" stroke="#000" stroke-width="1.3"/>
<line x1="252" y1="677.5" x2="255.5" y2="677.5" stroke="#000" stroke-width="1.3"/>
<line x1="887" y1="677.5" x2="883.5" y2="677.5" stroke="#000" stroke-width="1.3"/>
<line x1="252" y1="669.5" x2="255.5" y2="669.5" stroke="#000" stroke-width="1.3"/>
<line x1="887" y1="669.5" x2="883.5" y2="669.5" stroke="#000" stroke-width="1.3"/>
<line x1="252" y1="662.5" x2="255.5" y2="662.5" stroke="#000" stroke-width="1.3"/>
<line x1="887" y1="662.5" x2="883.5" y2="662.5" stroke="#000" stroke-width="1.3"/>
<line x1="252" y1="655.5" x2="255.5" y2="655.5" stroke="#000" stroke-width="1.3"/>
<line x1="887" y1="655.5" x2="883.5" y2="655.5" stroke="#000" stroke-width="1.3"/>
<line x1="252" y1="647.5" x2="258" y2="647.5" stroke="#000" stroke-width="1.3"/>
<line x1="887" y1="647.5" x2="881" y2="647.5" stroke="#000" stroke-width="1.3"/>
<line x1="252" y1="640.5" x2="255.5" y2="640.5" stroke="#000" stroke-width="1.3"/>
<line x1="887" y1="640.5" x2="883.5" y2="640.5" stroke="#000" stroke-width="1.3"/>
<line x1="252" y1="632.5" x2="255.5" y2="632.5" stroke="#000" stroke-width="1.3"/>
<line x1="887" y1="632.5" x2="883.5" y2="632.5" stroke="#000" stroke-width="1.3"/>
<line x1="252" y1="625.5" x2="255.5" y2="625.5" stroke="#000" stroke-width="1.3"/>
<line x1="887" y1="625.5" x2="883.5" y2="625.5" stroke="#000" stroke-width="1.3"/>
<line x1="252" y1="617.5" x2="255.5" y2="617.5" stroke="#000" stroke-width="1.3"/>
<line x1="887" y1="617.5" x2="883.5" y2="617.5" stroke="#000" stroke-width="1.3"/>
<line x1="252" y1="610.5" x2="258" y2="610.5" stroke="#000" stroke-width="1.3"/>
<line x1="887" y1="610.5" x2="881" y2="610.5" stroke="#000" stroke-width="1.3"/>
<line x1="252" y1="602.5" x2="255.5" y2="602.5" stroke="#000" stroke-width="1.3"/>
<line x1="887" y1="602.5" x2="883.5" y2="602.5" stroke="#000" stroke-width="1.3"/>
<line x1="252" y1="595.5" x2="255.5" y2="595.5" stroke="#000" stroke-width="1.3"/>
<line x1="887" y1="595.5" x2="883.5" y2="595.5" stroke="#000" stroke-width="1.3"/>
<line x1="252" y1="587.5" x2="255.5" y2="587.5" stroke="#000" stroke-width="1.3"/>
<line x1="887" y1="587.5" x2="883.5" y2="587.5" stroke="#000" stroke-width="1.3"/>
<line x1="252" y1="580.5" x2="255.5" y2="580.5" stroke="#000" stroke-width="1.3"/>
<line x1="887" y1="580.5" x2="883.5" y2="580.5" stroke="#000" stroke-width="1.3"/>
<line x1="252" y1="573.5" x2="258" y2="573.5" stroke="#000" stroke-width="1.3"/>
<line x1="887" y1="573.5" x2="881" y2="573.5" stroke="#000" stroke-width="1.3"/>
<line x1="252" y1="565.5" x2="255.5" y2="565.5" stroke="#000" stroke-width="1.3"/>
<line x1="887" y1="565.5" x2="883.5" y2="565.5" stroke="#000" stroke-width="1.3"/>
<line x1="252" y1="558.5" x2="255.5" y2="558.5" stroke="#000" stroke-width="1.3"/>
<line x1="887" y1="558.5" x2="883.5" y2="558.5" stroke="#000" stroke-width="1.3"/>
<line x1="252" y1="550.5" x2="255.5" y2="550.5" stroke="#000" stroke-width="1.3"/>
<line x1="887" y1="550.5" x2="883.5" y2="550.5" stroke="#000" stroke-width="1.3"/>
<line x1="252" y1="543.5" x2="255.5" y2="543.5" stroke="#000" stroke-width="1.3"/>
<line x1="887" y1="543.5" x2="883.5" y2="543.5" stroke="#000" stroke-width="1.3"/>
<line x1="252" y1="535.5" x2="258" y2="535.5" stroke="#000" stroke-width="1.3"/>
<line x1="887" y1="535.5" x2="881" y2="535.5" stroke="#000" stroke-width="1.3"/>
<line x1="252" y1="528.5" x2="255.5" y2="528.5" stroke="#000" stroke-width="1.3"/>
<line x1="887" y1="528.5" x2="883.5" y2="528.5" stroke="#000" stroke-width="1.3"/>
<line x1="252" y1="520.5" x2="255.5" y2="520.5" stroke="#000" stroke-width="1.3"/>
<line x1="887" y1="520.5" x2="883.5" y2="520.5" stroke="#000" stroke-width="1.3"/>
<line x1="252" y1="513.5" x2="255.5" y2="513.5" stroke="#000" stroke-width="1.3"/>
<line x1="887" y1="513.5" x2="883.5" y2="513.5" stroke="#000" stroke-width="1.3"/>
<line x1="252" y1="505.5" x2="255.5" y2="505.5" stroke="#000" stroke-width="1.3"/>
<line x1="887" y1="505.5" x2="883.5" y2="505.5" stroke="#000" stroke-width="1.3"/>
<line x1="252" y1="498.5" x2="258" y2="498.5" stroke="#000" stroke-width="1.3"/>
<line x1="887" y1="498.5" x2="881" y2="498.5" stroke="#000" stroke-width="1.3"/>
<line x1="252" y1="491.5" x2="255.5" y2="491.5" stroke="#000" stroke-width="1.3"/>
<line x1="887" y1="491.5" x2="883.5" y2="491.5" stroke="#000" stroke-width="1.3"/>
<line x1="252" y1="483.5" x2="255.5" y2="483.5" stroke="#000" stroke-width="1.3"/>
<line x1="887" y1="483.5" x2="883.5" y2="483.5" stroke="#000" stroke-width="1.3"/>
<line x1="252" y1="476.5" x2="255.5" y2="476.5" stroke="#000" stroke-width="1.3"/>
<line x1="887" y1="476.5" x2="883.5" y2="476.5" stroke="#000" stroke-width="1.3"/>
<line x1="252" y1="468.5" x2="255.5" y2="468.5" stroke="#000" stroke-width="1.3"/>
<line x1="887" y1="468.5" x2="883.5" y2="468.5" stroke="#000" stroke-width="1.3"/>
<line x1="252" y1="461.5" x2="258" y2="461.5" stroke="#000" stroke-width="1.3"/>
<line x1="887" y1="461.5" x2="881" y2="461.5" stroke="#000" stroke-width="1.3"/>
<line x1="252" y1="453.5" x2="255.5" y2="453.5" stroke="#000" stroke-width="1.3"/>
<line x1="887" y1="453.5" x2="883.5" y2="453.5" stroke="#000" stroke-width="1.3"/>
<line x1="252" y1="446.5" x2="255.5" y2="446.5" stroke="#000" stroke-width="1.3"/>
<line x1="887" y1="446.5" x2="883.5" y2="446.5" stroke="#000" stroke-width="1.3"/>
<line x1="252" y1="438.5" x2="255.5" y2="438.5" stroke="#000" stroke-width="1.3"/>
<line x1="887" y1="438.5" x2="883.5" y2="438.5" stroke="#000" stroke-width="1.3"/>
<line x1="252" y1="431.5" x2="255.5" y2="431.5" stroke="#000" stroke-width="1.3"/>
<line x1="887" y1="431.5" x2="883.5" y2="431.5" stroke="#000" stroke-width="1.3"/>
<line x1="252" y1="423.5" x2="258" y2="423.5" stroke="#000" stroke-width="1.3"/>
<line x1="887" y1="423.5" x2="881" y2="423.5" stroke="#000" stroke-width="1.3"/>
<line x1="289.5" y1="688" x2="289.5" y2="684.5" stroke="#000" stroke-width="1.3"/>
<line x1="289.5" y1="421" x2="289.5" y2="424.5" stroke="#000" stroke-width="1.3"/>
<line x1="326.5" y1="688" x2="326.5" y2="684.5" stroke="#000" stroke-width="1.3"/>
<line x1="326.5" y1="421" x2="326.5" y2="424.5" stroke="#000" stroke-width="1.3"/>
<line x1="364.5" y1="688" x2="364.5" y2="684.5" stroke="#000" stroke-width="1.3"/>
<line x1="364.5" y1="421" x2="364.5" y2="424.5" stroke="#000" stroke-width="1.3"/>
<line x1="401.5" y1="688" x2="401.5" y2="684.5" stroke="#000" stroke-width="1.3"/>
<line x1="401.5" y1="421" x2="401.5" y2="424.5" stroke="#000" stroke-width="1.3"/>
<line x1="439.5" y1="688" x2="439.5" y2="682" stroke="#000" stroke-width="1.3"/>
<line x1="439.5" y1="421" x2="439.5" y2="427" stroke="#000" stroke-width="1.3"/>
<line x1="476.5" y1="688" x2="476.5" y2="684.5" stroke="#000" stroke-width="1.3"/>
<line x1="476.5" y1="421" x2="476.5" y2="424.5" stroke="#000" stroke-width="1.3"/>
<line x1="513.5" y1="688" x2="513.5" y2="684.5" stroke="#000" stroke-width="1.3"/>
<line x1="513.5" y1="421" x2="513.5" y2="424.5" stroke="#000" stroke-width="1.3"/>
<line x1="551.5" y1="688" x2="551.5" y2="684.5" stroke="#000" stroke-width="1.3"/>
<line x1="551.5" y1="421" x2="551.5" y2="424.5" stroke="#000" stroke-width="1.3"/>
<line x1="588.5" y1="688" x2="588.5" y2="684.5" stroke="#000" stroke-width="1.3"/>
<line x1="588.5" y1="421" x2="588.5" y2="424.5" stroke="#000" stroke-width="1.3"/>
<line x1="626.5" y1="688" x2="626.5" y2="682" stroke="#000" stroke-width="1.3"/>
<line x1="626.5" y1="421" x2="626.5" y2="427" stroke="#000" stroke-width="1.3"/>
<line x1="663.5" y1="688" x2="663.5" y2="684.5" stroke="#000" stroke-width="1.3"/>
<line x1="663.5" y1="421" x2="663.5" y2="424.5" stroke="#000" stroke-width="1.3"/>
<line x1="700.5" y1="688" x2="700.5" y2="684.5" stroke="#000" stroke-width="1.3"/>
<line x1="700.5" y1="421" x2="700.5" y2="424.5" stroke="#000" stroke-width="1.3"/>
<line x1="738.5" y1="688" x2="738.5" y2="684.5" stroke="#000" stroke-width="1.3"/>
<line x1="738.5" y1="421" x2="738.5" y2="424.5" stroke="#000" stroke-width="1.3"/>
<line x1="775.5" y1="688" x2="775.5" y2="684.5" stroke="#000" stroke-width="1.3"/>
<line x1="775.5" y1="421" x2="775.5" y2="424.5" stroke="#000" stroke-width="1.3"/>
<line x1="813.5" y1="688" x2="813.5" y2="682" stroke="#000" stroke-width="1.3"/>
<line x1="813.5" y1="421" x2="813.5" y2="427" stroke="#000" stroke-width="1.3"/>
<line x1="850.5" y1="688" x2="850.5" y2="684.5" stroke="#000" stroke-width="1.3"/>
<line x1="850.5" y1="421" x2="850.5" y2="424.5" stroke="#000" stroke-width="1.3"/>
<text x="246" y="465.5" text-anchor="end" font-size="12" fill="#000">2,5</text>
<text x="246" y="502.8" text-anchor="end" font-size="12" fill="#000">2</text>
<text x="246" y="540.0" text-anchor="end" font-size="12" fill="#000">1,5</text>
<text x="246" y="577.3" text-anchor="end" font-size="12" fill="#000">1</text>
<text x="246" y="614.6" text-anchor="end" font-size="12" fill="#000">0,5</text>
<text x="246" y="651.9" text-anchor="end" font-size="12" fill="#000">0</text>
<text x="246" y="689.2" text-anchor="end" font-size="12" fill="#000">-0,5</text>
<text x="252.0" y="703.5" text-anchor="middle" font-size="12" fill="#000">00:00</text>
<text x="439.0" y="703.5" text-anchor="middle" font-size="12" fill="#000">00:10</text>
<text x="626.0" y="703.5" text-anchor="middle" font-size="12" fill="#000">00:20</text>
<text x="813.0" y="703.5" text-anchor="middle" font-size="12" fill="#000">00:30</text>
<polyline points="253.0,632.4 261.0,641.4 267.2,641.1 273.4,641.0 279.6,641.3 285.9,641.0 292.1,640.9 298.3,641.3 304.5,641.9 310.7,641.7 316.9,641.7 323.1,641.1 329.4,641.4 335.6,641.2 341.8,641.0 348.0,641.4 358.0,634.4 364.1,634.0 370.1,634.1 376.2,634.9 382.3,634.8 388.3,634.7 394.4,634.7 400.5,634.1 406.5,634.2 412.6,634.5 418.7,634.7 424.7,634.8 430.8,634.8 436.9,633.9 442.9,634.5 449.0,634.4 456.0,621.4 462.1,621.7 468.1,621.5 474.2,621.2 480.3,621.6 486.3,621.3 492.4,622.3 498.5,622.3 504.5,622.0 510.6,621.8 516.7,622.5 522.7,622.2 528.8,622.6 534.9,622.6 540.9,622.3 547.0,622.4 553.0,596.4 557.0,598.9 563.4,598.9 569.7,599.2 576.1,599.1 582.4,599.0 588.8,599.2 595.1,599.9 601.5,599.1 607.9,599.3 614.2,600.0 620.6,599.7 626.9,600.1 633.3,600.2 639.6,600.1 646.0,600.4 655.5,509.4 659.0,511.9 665.1,512.3 671.2,511.3 677.2,511.5 683.3,511.1 689.4,511.5 695.5,511.0 701.5,510.9 707.6,511.2 713.7,510.7 719.8,510.8 725.8,511.1 731.9,510.1 738.0,510.4 746.0,492.4 755.0,552.4 761.2,552.0 767.5,552.3 773.7,552.9 779.9,552.8 786.2,552.5 792.4,552.7 798.6,552.6 804.8,553.0 811.1,552.6 817.3,553.4 823.5,553.7 829.8,553.8 836.0,553.4 850.5,502.0 858.0,591.4 861.0,593.0 871.6,641.0 878.0,641.5 884.5,641.4" fill="none" stroke="#9a9a9a" stroke-width="1.2" stroke-linejoin="round" stroke-linecap="round"/>
<polyline points="253.0,603.4 259.0,603.0 265.0,603.8 271.0,603.7 277.0,603.1 283.0,603.4 289.0,603.3 295.0,603.6 301.0,603.7 307.0,603.0 313.0,602.9 319.0,603.8 325.0,603.3 331.0,603.7 337.0,602.9 343.0,603.4 350.0,597.4 356.1,597.3 362.1,597.6 368.2,597.1 374.3,597.9 380.3,597.8 386.4,596.9 392.5,596.9 398.5,597.4 404.6,597.9 410.7,597.3 416.7,597.1 422.8,597.3 428.9,596.9 434.9,597.1 441.0,597.4 451.0,584.8 457.4,584.7 463.7,584.7 470.1,584.4 476.4,584.4 482.8,584.3 489.1,584.6 495.5,584.4 501.9,584.0 508.2,584.9 514.6,584.6 520.9,584.6 527.3,584.1 533.6,585.0 540.0,584.4 547.0,562.4 553.2,562.8 559.5,562.0 565.7,562.3 571.9,562.8 578.2,562.8 584.4,563.1 590.6,562.5 596.9,563.0 603.1,562.9 609.3,562.5 615.6,562.9 621.8,563.2 628.0,563.2 634.3,562.9 640.5,562.9 648.0,487.9 654.2,488.0 660.3,487.4 666.5,487.6 672.7,488.2 678.9,487.8 685.0,487.5 691.2,488.0 697.4,488.1 703.5,488.1 709.7,487.8 715.9,487.8 722.1,487.9 728.2,488.2 734.4,487.9 738.6,469.0 745.5,469.0 750.0,480.4 756.6,524.8 762.9,524.8 769.1,524.7 775.4,524.8 781.6,524.3 787.9,524.3 794.2,525.0 800.4,525.3 806.7,524.9 812.9,524.7 819.2,524.4 825.4,524.8 831.7,524.8 842.4,466.9 849.7,466.9 853.6,495.4 858.0,558.4 864.0,582.4 873.0,604.9 884.5,604.9" fill="none" stroke="#ff0000" stroke-width="2.6" stroke-linejoin="round" stroke-linecap="round"/>
<polyline points="253.0,679.0 259.1,679.5 265.3,679.5 271.4,678.5 277.5,678.5 283.7,679.4 289.8,679.3 295.9,679.2 302.1,678.8 308.2,679.1 314.3,679.1 320.5,679.1 326.6,678.6 332.7,678.9 338.9,678.9 345.0,679.0 356.8,672.9 363.2,673.1 369.6,673.4 376.0,673.4 382.5,672.9 388.9,672.8 395.3,672.6 401.7,672.4 408.1,672.4 414.5,672.9 420.9,672.7 427.4,672.8 433.8,673.3 440.2,672.9 446.6,672.9 457.5,661.1 463.9,661.1 470.2,660.7 476.6,660.4 483.0,660.7 489.3,660.5 495.7,660.8 502.1,661.3 508.4,660.9 514.8,660.3 521.1,661.0 527.5,660.9 533.9,660.8 540.2,660.9 546.6,660.4 555.0,639.0 561.0,639.3 567.0,639.3 573.0,638.8 579.0,639.5 585.0,639.5 591.0,638.6 597.0,639.3 603.0,639.2 609.0,639.0 615.0,639.0 621.0,639.0 627.0,639.5 633.0,639.0 639.0,639.4 645.0,639.0 655.6,564.4 661.7,564.1 667.9,564.6 674.0,564.5 680.2,564.0 686.3,564.0 692.5,564.3 698.6,563.9 704.7,563.6 710.9,563.2 717.0,563.2 723.2,563.5 729.3,562.8 735.5,563.5 741.6,563.0 749.4,599.0 755.4,598.7 761.4,599.5 767.4,598.8 773.4,599.5 779.4,599.2 785.4,599.0 791.4,599.0 797.5,599.2 803.5,599.1 809.5,598.8 815.5,598.7 821.5,599.0 827.5,599.5 833.5,599.1 839.5,599.0 843.0,573.4 846.0,576.4 850.5,633.4 857.5,666.4 864.7,681.0 871.3,680.5 877.9,681.4 884.5,681.0" fill="none" stroke="#ff0000" stroke-width="2.6" stroke-linejoin="round" stroke-linecap="round"/>
<polyline points="253.0,641.8 259.1,641.5 265.3,641.8 271.4,641.7 277.5,641.9 283.7,641.9 289.8,641.3 295.9,641.3 302.1,642.2 308.2,641.5 314.3,641.5 320.5,642.3 326.6,641.8 332.7,642.2 338.9,641.8 345.0,641.8 355.0,635.0 361.1,635.2 367.2,634.6 373.3,635.1 379.4,635.4 385.5,635.0 391.6,635.3 397.7,635.2 403.9,634.5 410.0,635.3 416.1,635.1 422.2,634.8 428.3,634.5 434.4,635.4 440.5,635.0 446.6,635.0 453.4,622.4 459.4,622.7 465.5,622.9 471.5,622.8 477.6,623.0 483.6,622.5 489.6,623.0 495.7,622.6 501.7,623.2 507.8,623.2 513.8,622.4 519.8,622.4 525.9,622.6 531.9,623.4 538.0,622.9 544.0,623.0 551.4,600.0 557.4,600.1 563.5,599.8 569.5,600.0 575.6,599.9 581.6,599.8 587.6,600.1 593.7,600.1 599.7,600.4 605.8,600.2 611.8,600.5 617.8,600.4 623.9,600.5 629.9,600.2 636.0,599.6 642.0,600.0 653.5,526.4 660.0,526.7 666.4,526.8 672.9,526.6 679.3,526.2 685.8,526.3 692.2,525.6 698.7,526.2 705.1,525.9 711.6,525.5 718.0,525.2 724.5,525.9 730.9,526.0 737.4,525.4 741.6,505.9 745.5,519.4 752.4,562.1 758.8,561.7 765.2,562.5 771.6,562.1 778.0,561.8 784.4,562.0 790.8,562.5 797.2,562.7 803.6,561.8 810.0,562.4 816.4,561.8 822.8,562.6 829.2,562.2 835.6,562.4 846.7,504.4 852.0,594.4 861.0,630.4 869.5,642.4 877.0,642.6 884.5,641.9" fill="none" stroke="#00ee00" stroke-width="2.6" stroke-linejoin="round" stroke-linecap="round"/>
<rect x="264.5" y="434.5" width="119" height="90" fill="#4e5a64" stroke="#1c1c1c" stroke-width="1"/>
<line x1="271" y1="448.6" x2="303" y2="448.6" stroke="#ff0000" stroke-width="2.6"/>
<line x1="271" y1="469.5" x2="303" y2="469.5" stroke="#ff0000" stroke-width="2.6"/>
<line x1="271" y1="490.2" x2="303" y2="490.2" stroke="#00ee00" stroke-width="2.6"/>
<line x1="271" y1="511.4" x2="303" y2="511.4" stroke="#a0a0a0" stroke-width="1"/>
<text x="310.5" y="452" font-size="12.6" fill="#ececec">Upper Limit</text>
<text x="310.5" y="473" font-size="12.6" fill="#ececec">Lower Limit</text>
<text x="310.5" y="494" font-size="12.6" fill="#ececec">M1</text>
<text x="310.5" y="515" font-size="12.6" fill="#ececec">M2</text>
</svg>

<div style="position:absolute;left:9.6px;top:732px;font-size:12.16px;line-height:16px;color:#eeeeee;white-space:nowrap">Fingerprint Bericht -</div>
<div style="position:absolute;left:122.3px;top:732px;font-size:12.16px;line-height:16px;color:#eeeeee;white-space:nowrap">Gruppe: Kunde Rheinböllen -</div>
<div style="position:absolute;left:284.5px;top:732px;font-size:12.16px;line-height:16px;color:#eeeeee;white-space:nowrap">Maschine:SW BAW4-42 -</div>
<div style="position:absolute;left:429.5px;top:732px;font-size:12.16px;line-height:16px;color:#eeeeee;white-space:nowrap;letter-spacing:-0.2px">Gerät: UT-Cm-Pro -</div>
<div style="position:absolute;left:536.7px;top:732px;font-size:12.16px;line-height:16px;color:#eeeeee;white-space:nowrap">Name: BS-785F59E47CE9E611 -</div>
<div style="position:absolute;left:719.7px;top:732px;font-size:12.16px;line-height:16px;color:#eeeeee;white-space:nowrap">ID: 785F59E47CE9E611</div>
<div style="position:absolute;left:855px;top:732px;font-size:12.16px;line-height:16px;color:#eeeeee;white-space:nowrap">(192.1<span style="letter-spacing:-0.6px">...</span></div>

<div style="position:absolute;left:9px;top:754px;width:97px;height:32px;border:4px solid #5e6878;border-radius:5px;background:#6fa534;overflow:hidden;color:#f2f2f2;font-size:12.8px"><div style="position:absolute;left:0;right:0;top:9px;text-align:center;line-height:16px">Hauptseite</div></div>
<div style="position:absolute;left:121px;top:754px;width:97px;height:32px;border:4px solid #5e6878;border-radius:5px;background:#6fa534;overflow:hidden;color:#f2f2f2;font-size:12.8px"><div style="position:absolute;left:0;right:0;top:0;height:29px;overflow:hidden"><div style="position:absolute;left:0;right:0;top:1px;text-align:center;line-height:15px">Vorherige<br>Messung</div></div></div>
<div style="position:absolute;left:233px;top:754px;width:97px;height:32px;border:4px solid #5e6878;border-radius:5px;background:#6fa534;overflow:hidden;color:#f2f2f2;font-size:12.8px"><div style="position:absolute;left:0;right:0;top:0;height:29px;overflow:hidden"><div style="position:absolute;left:0;right:0;top:1px;text-align:center;line-height:15px">Nächste<br>Messung</div></div></div>
<div style="position:absolute;left:345px;top:754px;width:97px;height:32px;border:4px solid #5e6878;border-radius:5px;background:#6fa534;overflow:hidden;color:#f2f2f2;font-size:12.8px"><div style="position:absolute;left:0;right:0;top:0;height:29px;overflow:hidden"><div style="position:absolute;left:0;right:0;top:1px;text-align:center;line-height:15px">Messung<br>Ein/Ausblenden</div></div></div>
<div style="position:absolute;left:457px;top:754px;width:97px;height:32px;border:4px solid #5e6878;border-radius:5px;background:#6fa534;overflow:hidden;color:#f2f2f2;font-size:12.8px"><div style="position:absolute;left:0;right:0;top:0;height:29px;overflow:hidden"><div style="position:absolute;left:0;right:0;top:1px;text-align:center;line-height:15px">Messung<br>Löschen</div></div></div>
<div style="position:absolute;left:569px;top:754px;width:97px;height:32px;border:4px solid #5e6878;border-radius:5px;background:#6fa534;overflow:hidden;color:#f2f2f2;font-size:12.8px"><div style="position:absolute;left:0;right:0;top:9px;text-align:center;line-height:16px">Setup</div></div>
<div style="position:absolute;left:681px;top:754px;width:97px;height:32px;border:4px solid #5e6878;border-radius:5px;background:#6fa534;overflow:hidden;color:#f2f2f2;font-size:12.8px"><div style="position:absolute;left:0;right:0;top:9px;text-align:center;line-height:16px">Messung</div></div>
<div style="position:absolute;left:793px;top:754px;width:97px;height:32px;border:4px solid #5e6878;border-radius:5px;background:#97d855;overflow:hidden;color:#ccff00;font-size:12.8px"><div style="position:absolute;left:0;right:0;top:9px;text-align:center;line-height:16px">Bericht</div></div>
</body></html>
